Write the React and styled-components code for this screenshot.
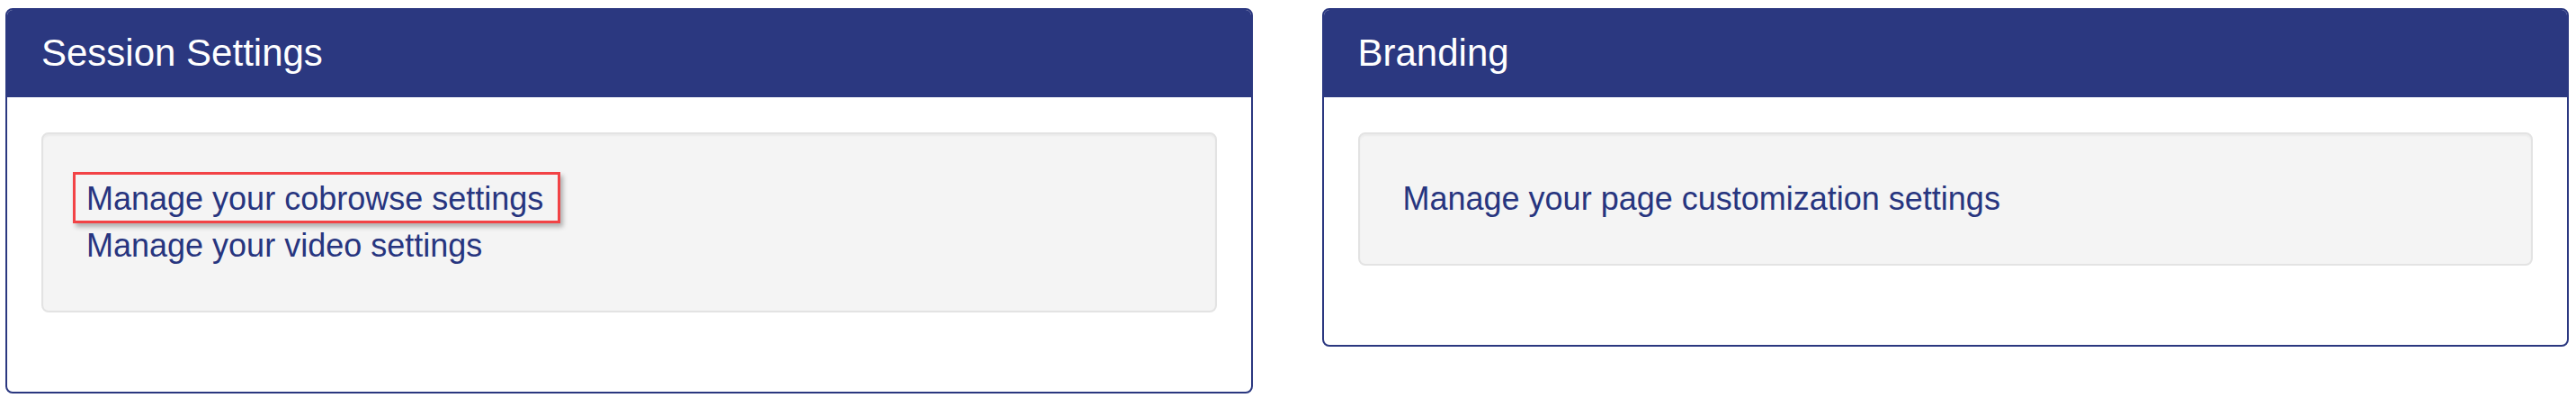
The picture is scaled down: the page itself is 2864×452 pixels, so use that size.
import styled, { createGlobalStyle } from 'styled-components'

const GlobalStyle = createGlobalStyle`
  html, body {
    margin: 0;
    padding: 0;
    background: #ffffff;
    font-family: "Liberation Sans", Arial, sans-serif;
  }
`

const Page = styled.div`
  display: flex;
  align-items: flex-start;
  gap: 77px;
  padding: 9px 8px 0 6px;
`

const Panel = styled.section`
  flex: 1;
  border: 2px solid #2b3880;
  border-radius: 8px;
  background: #ffffff;
  overflow: hidden;
`

const Heading = styled.div`
  background: #2b3880;
  margin: -2px -2px 0;
  padding: 28px 41px 27px 40px;
`

const Title = styled.h3`
  margin: 0;
  color: #ffffff;
  font-size: 42px;
  font-weight: 400;
  line-height: 44px;
`

const Body = styled.div`
  padding: 39px 38px 40px;
`

const Well = styled.div`
  background: #f4f4f4;
  border: 2px solid #e3e3e3;
  border-radius: 8px;
  box-shadow: inset 0 2px 2px rgba(0, 0, 0, 0.04);
  padding: 46px 48px;
  margin-bottom: 48px;
`

const Link = styled.a`
  position: relative;
  display: block;
  width: fit-content;
  color: #27357f;
  font-size: 36px;
  line-height: 52px;
  text-decoration: none;
  cursor: pointer;

  ${({ $marked }) => $marked && `
    &::after {
      content: '';
      position: absolute;
      top: -4px;
      bottom: -1px;
      left: -15px;
      right: -19px;
      border: 3px solid #f24346;
      box-shadow: 3px 4px 5px rgba(0, 0, 0, 0.28);
      pointer-events: none;
    }
  `}
`

const panels = [
  {
    title: 'Session Settings',
    links: [
      { text: 'Manage your cobrowse settings', marked: true },
      { text: 'Manage your video settings' },
    ],
  },
  {
    title: 'Branding',
    links: [{ text: 'Manage your page customization settings' }],
  },
]

export default function App() {
  return (
    <>
      <GlobalStyle />
      <Page>
        {panels.map((panel) => (
          <Panel key={panel.title}>
            <Heading>
              <Title>{panel.title}</Title>
            </Heading>
            <Body>
              <Well>
                {panel.links.map((link) => (
                  <Link key={link.text} $marked={link.marked}>
                    {link.text}
                  </Link>
                ))}
              </Well>
            </Body>
          </Panel>
        ))}
      </Page>
    </>
  )
}
